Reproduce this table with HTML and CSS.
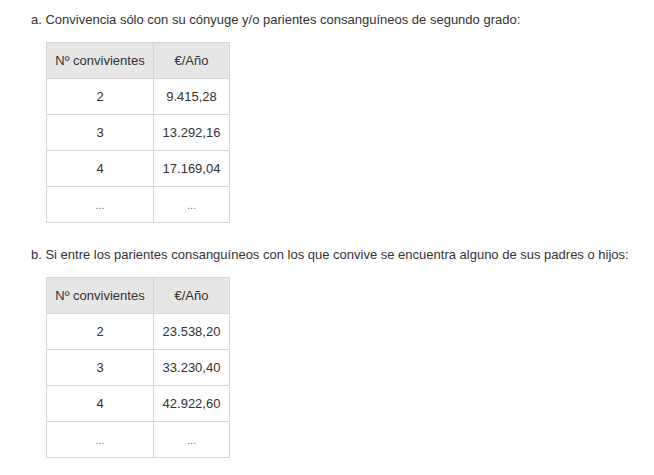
FILE: index.html
```html
<!DOCTYPE html>
<html lang="es">
<head>
<meta charset="utf-8">
<link rel="stylesheet" href="styles.css">
</head>
<body>
<div class="content">
  <p class="item">a. Convivencia sólo con su cónyuge y/o parientes consanguíneos de segundo grado:</p>
  <table class="tbl">
    <thead><tr><th>Nº convivientes</th><th>€/Año</th></tr></thead>
    <tbody>
      <tr><td>2</td><td>9.415,28</td></tr>
      <tr><td>3</td><td>13.292,16</td></tr>
      <tr><td>4</td><td>17.169,04</td></tr>
      <tr><td class="dots">...</td><td class="dots">...</td></tr>
    </tbody>
  </table>
  <p class="item item-b">b. Si entre los parientes consanguíneos con los que convive se encuentra alguno de sus padres o hijos:</p>
  <table class="tbl">
    <thead><tr><th>Nº convivientes</th><th>€/Año</th></tr></thead>
    <tbody>
      <tr><td>2</td><td>23.538,20</td></tr>
      <tr><td>3</td><td>33.230,40</td></tr>
      <tr><td>4</td><td>42.922,60</td></tr>
      <tr><td class="dots">...</td><td class="dots">...</td></tr>
    </tbody>
  </table>
</div>
</body>
</html>
```
FILE: styles.css
```css
html, body {
  margin: 0;
  padding: 0;
  background: #ffffff;
}
body {
  font-family: "Liberation Sans", Arial, sans-serif;
  font-size: 13px;
  color: #333333;
}
.content {
  padding: 11px 0 0 31px;
}
.item {
  margin: 0;
  line-height: 18px;
}
.item-b {
  margin-bottom: 3px;
}
.tbl {
  border-collapse: collapse;
  margin: 13px 0 23px 15px;
}
.tbl th, .tbl td {
  border: 1px solid #d6d6d6;
  height: 36px;
  padding: 0 8px;
  text-align: center;
  font-weight: normal;
  box-sizing: border-box;
}
.tbl th {
  background: #e6e6e6;
}
.tbl th:first-child, .tbl td:first-child {
  width: 107px;
}
.tbl th:last-child, .tbl td:last-child {
  width: 76px;
}
.dots {
  color: #777777;
  font-size: 11px;
}
```
